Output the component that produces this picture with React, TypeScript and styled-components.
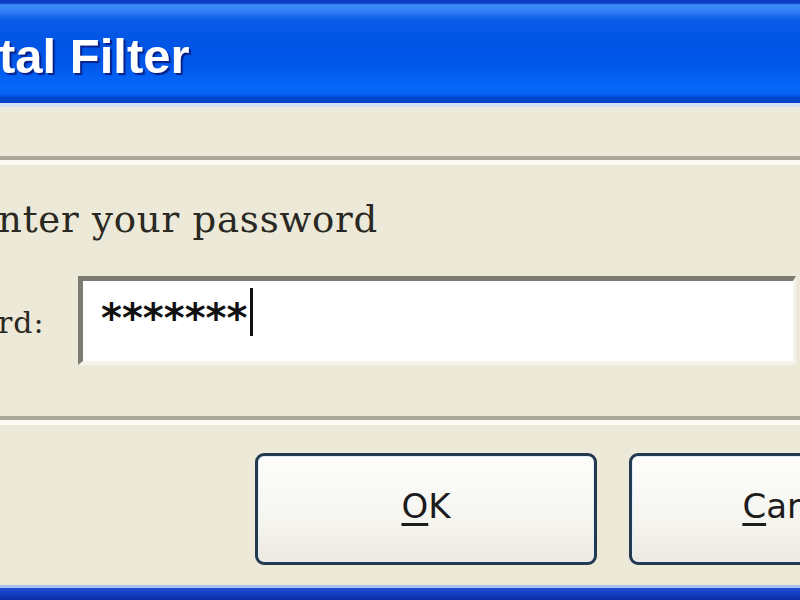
import styled, { createGlobalStyle } from "styled-components";

const GlobalStyle = createGlobalStyle`
  html, body {
    margin: 0;
    padding: 0;
    overflow: hidden;
  }
`;

export default function App() {
  return (
    <>
      <GlobalStyle />
      <Window>
        <TitleBar>
          <Title>tal Filter</Title>
        </TitleBar>
        <Body>
          <Separator />
          <Prompt>nter your password</Prompt>
          <FieldRow>
            <Label>rd:</Label>
            <PasswordBox>
              <Stars>*******</Stars>
              <Caret />
            </PasswordBox>
          </FieldRow>
          <Separator $gap={51} />
          <ButtonRow>
            <Button>
              <u>O</u>K
            </Button>
            <Button>
              <u>C</u>ancel
            </Button>
          </ButtonRow>
        </Body>
        <BottomFrame />
      </Window>
    </>
  );
}

const Window = styled.div`
  width: 800px;
  height: 600px;
  overflow: hidden;
  display: flex;
  flex-direction: column;
  background: #ece9d8;
`;

const TitleBar = styled.div`
  height: 103px;
  flex-shrink: 0;
  display: flex;
  align-items: center;
  border-bottom: 4px solid #d3e0f6;
  background: linear-gradient(
    to bottom,
    #0a3cc8 0px,
    #0a3cc8 3px,
    #3b8df7 5px,
    #2f7cf3 12px,
    #0a5ae8 20px,
    #0055e5 45px,
    #0058ea 65px,
    #0566f8 85px,
    #0663f5 94px,
    #0244cc 98px,
    #0340c4 103px
  );
`;

const Title = styled.h1`
  margin: 8px 0 0 -1px;
  font-family: "Liberation Sans", Arial, sans-serif;
  font-weight: bold;
  font-size: 49px;
  color: #ffffff;
  text-shadow: 2px 2px 1px #0a1f88;
  white-space: nowrap;
`;

const Body = styled.div`
  flex: 1;
  display: flex;
  flex-direction: column;
  padding-top: 49px;
`;

const Separator = styled.div<{ $gap?: number }>`
  height: 4px;
  margin-top: ${(p) => p.$gap ?? 0}px;
  background: #aca899;
  border-bottom: 5px solid #fbfaf5;
  flex-shrink: 0;
`;

const Prompt = styled.p`
  margin: 33px 0 0 -2px;
  font-family: "DejaVu Serif", "Liberation Serif", serif;
  font-size: 37px;
  line-height: 44px;
  letter-spacing: 0.8px;
  color: #2a2822;
  white-space: nowrap;
`;

const FieldRow = styled.div`
  display: grid;
  grid-template-columns: 78px 1fr;
  align-items: center;
  margin-top: 34px;
  padding-right: 4px;
`;

const Label = styled.span`
  font-family: "DejaVu Serif", "Liberation Serif", serif;
  font-size: 30px;
  letter-spacing: 1px;
  color: #2a2822;
  white-space: nowrap;
  margin-left: -2px;
  padding-top: 4px;
`;

const PasswordBox = styled.div`
  height: 80px;
  display: flex;
  align-items: center;
  padding-left: 18px;
  background: #ffffff;
  border-style: solid;
  border-width: 5px 3px 4px 5px;
  border-color: #7c7b72 #f4f3ec #f4f3ec #7c7b72;
`;

const Stars = styled.span`
  font-family: "DejaVu Sans", sans-serif;
  font-weight: bold;
  font-size: 40px;
  line-height: 40px;
  color: #111111;
  margin-top: -6px;
`;

const Caret = styled.span`
  width: 3px;
  height: 48px;
  background: #111111;
  margin-left: 3px;
  margin-bottom: 18px;
`;

const ButtonRow = styled.div`
  display: flex;
  gap: 32px;
  padding-left: 255px;
  margin-top: 28px;
`;

const Button = styled.button`
  flex-shrink: 0;
  width: 342px;
  height: 112px;
  border: 3px solid #22394f;
  border-radius: 9px;
  background: linear-gradient(to bottom, #fdfdfc 0%, #f6f5f0 60%, #ebe9e0 100%);
  box-shadow: inset 0 0 0 1px #e3eef8;
  font-family: "DejaVu Sans", Tahoma, sans-serif;
  font-size: 34px;
  color: #1c1c1c;
  padding: 0 0 6px 0;

  u {
    text-decoration-thickness: 3px;
    text-underline-offset: 5px;
  }
`;

const BottomFrame = styled.div`
  height: 12px;
  flex-shrink: 0;
  border-top: 3px solid #a9c2f0;
  background: linear-gradient(to bottom, #1d4fd6, #0a2ea8);
`;
